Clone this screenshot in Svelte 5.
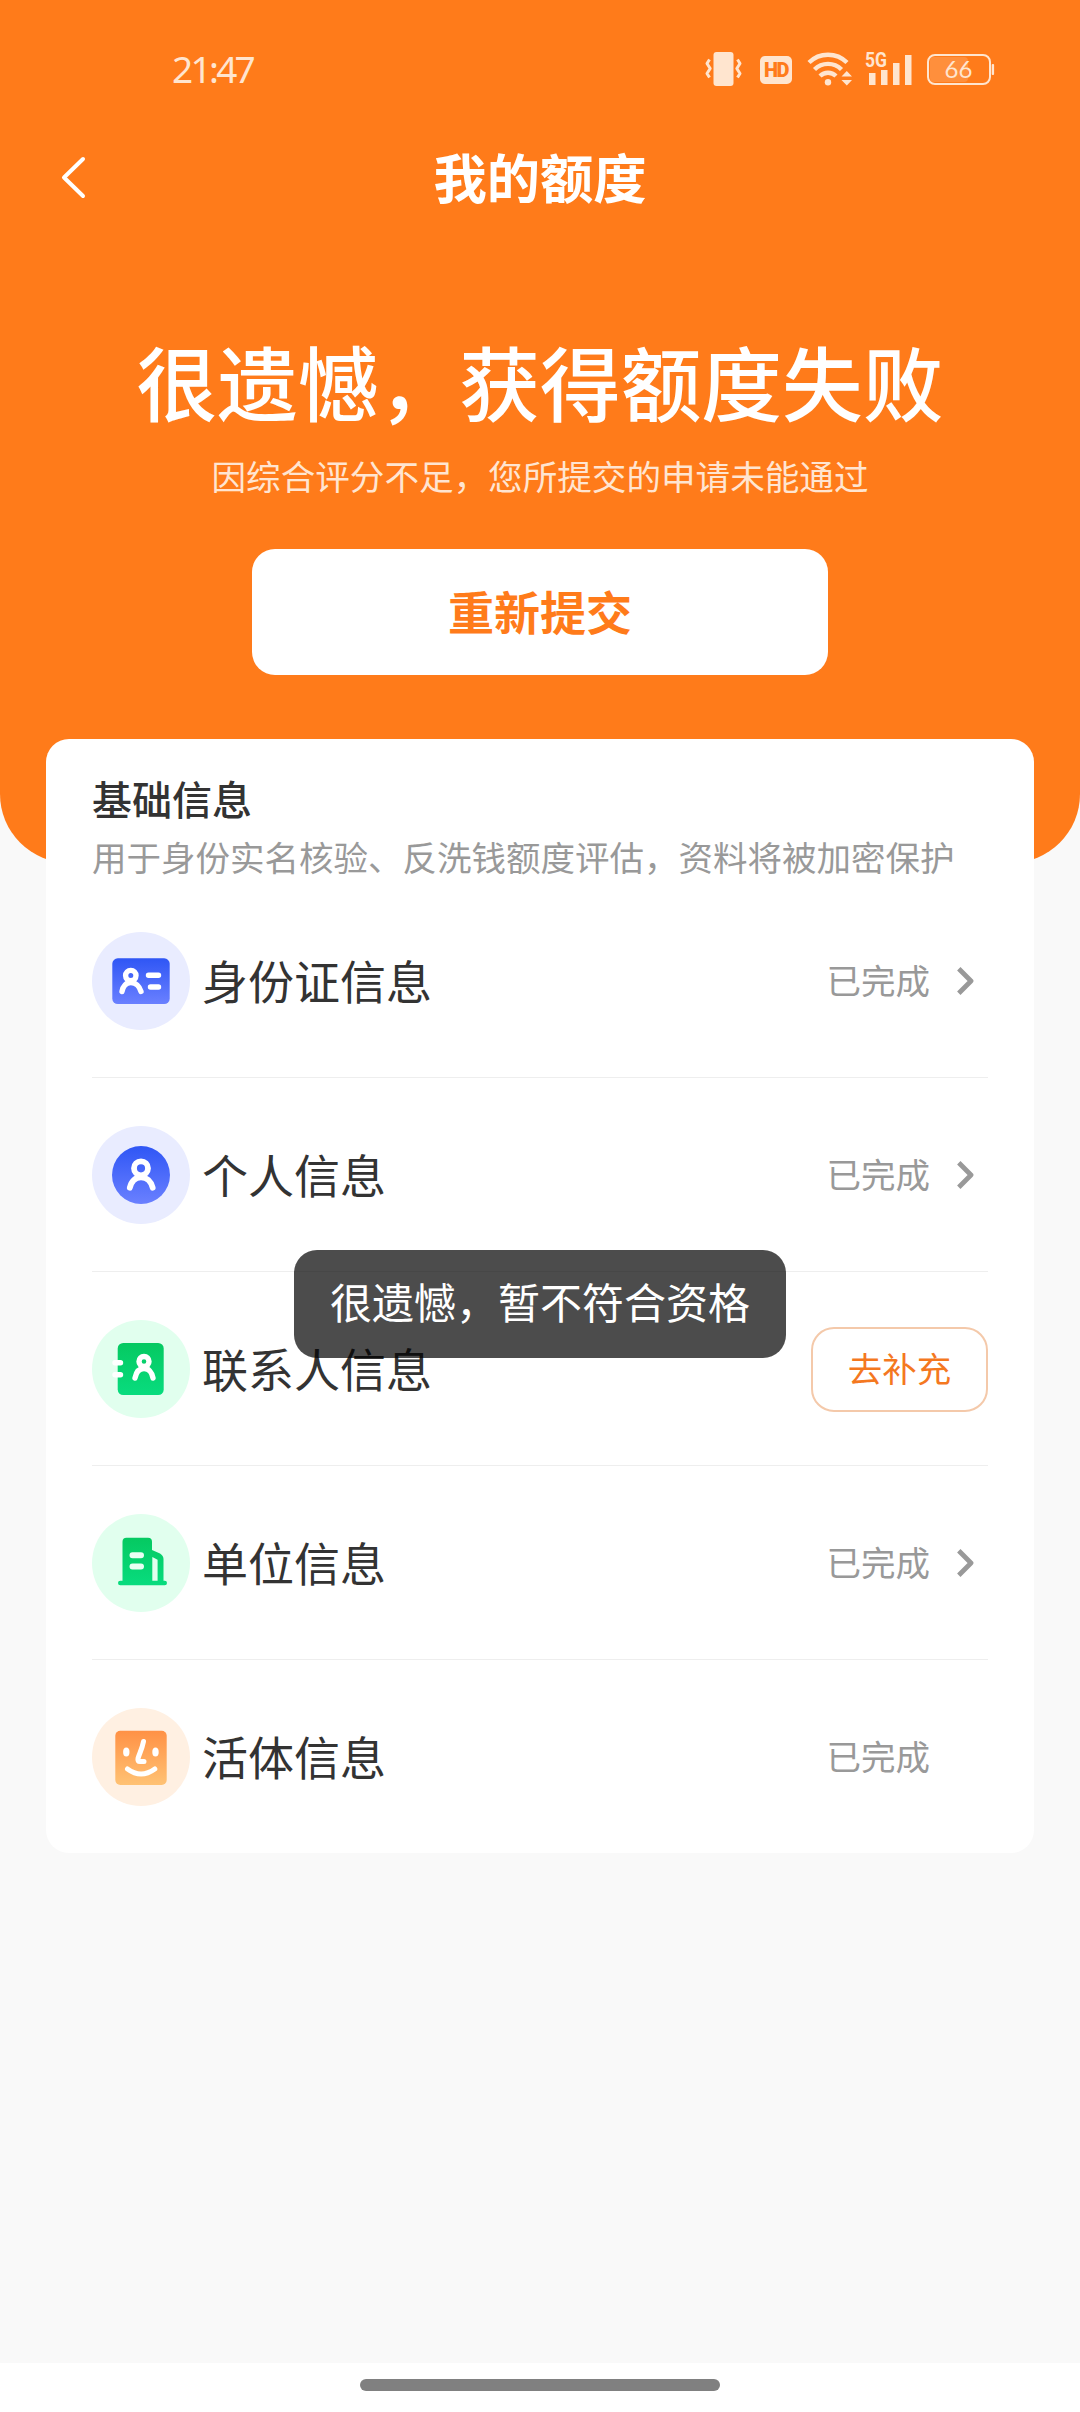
<script lang="ts">
    type Item = {
        icon: string;
        tone: string;
        label: string;
        action?: string;
        arrow?: boolean;
    };

    const items: Item[] = [
        { icon: "card", tone: "blue", label: "身份证信息", arrow: true },
        { icon: "person", tone: "blue", label: "个人信息", arrow: true },
        { icon: "contact", tone: "green", label: "联系人信息", action: "去补充" },
        { icon: "company", tone: "green", label: "单位信息", arrow: true },
        { icon: "face", tone: "orange", label: "活体信息" },
    ];

    const toast = "很遗憾，暂不符合资格";
</script>

<div class="page">
    <header class="hero">
        <div class="status-bar">
            <span class="time">21:47</span>
            <div class="status-icons">
                <svg class="vibrate" width="38" height="36" viewBox="0 0 38 36">
                    <rect x="8.5" y="1" width="20" height="34" rx="3" fill="#ffe5cf" />
                    <path d="M4.5 8.5 L2 12.5 L5.2 17.5 L2 22.5 L4.5 26.5 M32.5 8.5 L35 12.5 L31.8 17.5 L35 22.5 L32.5 26.5" fill="none" stroke="#ffe5cf" stroke-width="3" stroke-linejoin="round" />
                </svg>
                <span class="hd">HD</span>
                <svg class="wifi" width="46" height="36" viewBox="0 0 46 36">
                    <g fill="none" stroke="#ffe5cf" stroke-width="4.4">
                        <path d="M2 11.5 A27 27 0 0 1 40 11.5" />
                        <path d="M7.5 18.5 A19 19 0 0 1 34.5 18.5" />
                        <path d="M13 25 A11.5 11.5 0 0 1 29 25" />
                    </g>
                    <circle cx="21" cy="31.3" r="3.2" fill="#ffe5cf" />
                    <path d="M34.5 25.5 L39.8 20 L45 25.5 Z M34.5 29 L39.8 34.5 L45 29 Z" fill="#ffe5cf" />
                </svg>
                <svg class="signal" width="48" height="44" viewBox="0 -4 48 44">
                    <path d="M4 22 h6.5 v12 h-6.5 Z M16 19 h6.5 v15 h-6.5 Z M28 12 h6.5 v22 h-6.5 Z M40 4 h6.5 v30 h-6.5 Z" fill="#ffe5cf" />
                    <text x="0" y="16" class="net" textLength="22" lengthAdjust="spacingAndGlyphs">5G</text>
                </svg>
                <svg class="battery" width="68" height="36" viewBox="0 0 68 36">
                    <rect x="3" y="6" width="38" height="25" rx="4" fill="#ff8f3c" />
                    <rect x="1" y="4" width="62" height="29" rx="7" fill="none" stroke="#ffe5cf" stroke-width="2" />
                    <rect x="64.7" y="13" width="2.4" height="11" rx="1" fill="#ffe5cf" />
                    <text x="31.5" y="27" class="level" text-anchor="middle">66</text>
                </svg>
            </div>
        </div>

        <nav class="nav-bar">
            <button class="back" aria-label="返回">
                <svg width="28" height="46" viewBox="0 0 28 46">
                    <path d="M24 4 L5 22.5 L24 41" fill="none" stroke="#fff" stroke-width="4" stroke-linecap="round" stroke-linejoin="round" />
                </svg>
            </button>
            <h1>我的额度</h1>
        </nav>

        <h2>很遗憾，获得额度失败</h2>
        <p class="reason">因综合评分不足，您所提交的申请未能通过</p>
        <button class="resubmit">重新提交</button>
    </header>

    <main class="card">
        <h3>基础信息</h3>
        <p class="desc">用于身份实名核验、反洗钱额度评估，资料将被加密保护</p>

        <ul>
            {#each items as item}
                <li>
                    <span class="icon {item.tone}">
                        <svg width="98" height="98" viewBox="0 0 98 98" fill="none" stroke-linecap="round" stroke-linejoin="round">
                            <defs>
                                <linearGradient id="blue" x1="0" y1="0" x2="0" y2="1">
                                    <stop offset="0" stop-color="#2f56f5" />
                                    <stop offset="1" stop-color="#6a80ff" />
                                </linearGradient>
                                <linearGradient id="green" x1="0" y1="0" x2="0" y2="1">
                                    <stop offset="0" stop-color="#05c961" />
                                    <stop offset="1" stop-color="#08dc7e" />
                                </linearGradient>
                                <linearGradient id="orange" x1="0" y1="0" x2="0" y2="1">
                                    <stop offset="0" stop-color="#ff9145" />
                                    <stop offset="1" stop-color="#ffc274" />
                                </linearGradient>
                            </defs>
                            {#if item.icon === "card"}
                                <rect x="20.3" y="26.3" width="57.4" height="45.7" rx="5.5" fill="url(#blue)" />
                                <g stroke="#fff" stroke-width="5.4">
                                    <circle cx="38.8" cy="43.6" r="5.2" />
                                    <path d="M30 59.5 C31 54 34.5 50.5 38.8 50.5 C43.5 50.5 47.5 54 49 59.5" />
                                    <path d="M56.5 43.3 H66.5 M58.5 55 H66.5" />
                                </g>
                            {:else if item.icon === "person"}
                                <circle cx="49" cy="49" r="29" fill="url(#blue)" />
                                <g stroke="#fff" stroke-width="5.8">
                                    <circle cx="49" cy="42.3" r="7" />
                                    <path d="M37.8 61.7 C39.5 55 43.5 51.3 49 51.3 C54.5 51.3 59 55 60.7 61.7" />
                                </g>
                            {:else if item.icon === "contact"}
                                <rect x="25.7" y="23" width="46" height="52" rx="5.5" fill="url(#green)" />
                                <g stroke="#fff" stroke-width="5.4">
                                    <circle cx="52" cy="41.5" r="5" />
                                    <path d="M43 58 C44.2 52 47.5 48.5 52 48.5 C56.5 48.5 60 52 61 58" />
                                    <path d="M23 42.8 H28.5 M23 54.8 H28.5" />
                                </g>
                            {:else if item.icon === "company"}
                                <path d="M34.5 23.7 H56 Q60 23.7 60 27.7 V36 L68 39.4 Q71.5 41.6 71.5 45 V66.7 H72.7 Q75 66.7 75 69 Q75 71.3 72.7 71.3 H28.3 Q26 71.3 26 69 Q26 66.7 28.3 66.7 H30.5 V27.7 Q30.5 23.7 34.5 23.7 Z" fill="url(#green)" />
                                <path d="M60.3 43 L65.6 45.8 V66.7 H60.3 Z" fill="#e1ffee" />
                                <path d="M40.5 41.2 H49 M40.5 52.4 H49" stroke="#e9fff3" stroke-width="6" />
                            {:else}
                                <rect x="23.3" y="22.7" width="51.4" height="54.3" rx="5" fill="url(#orange)" />
                                <ellipse cx="34.3" cy="44" rx="3.2" ry="4.5" fill="#fff" />
                                <ellipse cx="63.5" cy="44" rx="3.2" ry="4.5" fill="#fff" />
                                <path d="M51.5 33.5 C49.8 42 47.5 45 46 50.5 Q45.3 53.5 48 53.5 H52" stroke="#fff" stroke-width="5" />
                                <path d="M35.5 61 Q49 71 62.8 61" stroke="#fff" stroke-width="5" />
                            {/if}
                        </svg>
                    </span>
                    <span class="label">{item.label}</span>
                    {#if item.action}
                        <button class="fill-in">{item.action}</button>
                    {:else}
                        <span class="done">已完成</span>
                        <span class="arrow">
                            {#if item.arrow}
                                <svg width="18" height="30" viewBox="0 0 18 30">
                                    <path d="M2.8 2.8 L15 15 L2.8 27.2" fill="none" stroke="#999" stroke-width="4.8" stroke-linejoin="round" />
                                </svg>
                            {/if}
                        </span>
                    {/if}
                </li>
            {/each}
        </ul>
    </main>

    <footer class="home-bar">
        <span></span>
    </footer>

    <div class="toast">{toast}</div>
</div>

<style>
:global(body) {
    margin: 0;
    background: #f9f9f9;
}

.page {
    position: relative;
    display: flex;
    flex-direction: column;
    width: 1080px;
    height: 2412px;
    background: #f9f9f9;
    font-family: "Noto Sans CJK SC", "Noto Sans", sans-serif;
    color: #333;
    overflow: hidden;
}

h1, h2, h3, p, ul {
    margin: 0;
    padding: 0;
}

button {
    padding: 0;
    border: none;
    background: none;
    font-family: inherit;
}

svg {
    display: block;
}

/* Orange header */
.hero {
    display: flex;
    flex-direction: column;
    align-items: center;
    flex-shrink: 0;
    box-sizing: border-box;
    height: 863px;
    background: #ff7b1a;
    border-radius: 0 0 69px 69px;
    color: #fff;
}

.status-bar {
    display: flex;
    align-items: center;
    justify-content: space-between;
    box-sizing: border-box;
    width: 100%;
    height: 138px;
    padding: 0 85px 0 172px;
}

.time {
    font-family: "Noto Sans", sans-serif;
    font-size: 37px;
    line-height: 40px;
    letter-spacing: -2.7px;
    color: #ffe5cf;
}

.status-icons {
    display: flex;
    align-items: center;
}

.hd {
    width: 32px;
    height: 28px;
    margin: 2px 15px 0 17px;
    border-radius: 5px;
    background: #ffe5cf;
    color: #ff7b1a;
    font-family: Roboto, sans-serif;
    font-size: 20px;
    font-weight: 900;
    line-height: 29px;
    letter-spacing: -1.5px;
    text-align: center;
}

.signal {
    margin-left: 12px;
}

.battery {
    margin-left: 14px;
}

.net {
    font-family: Roboto, sans-serif;
    font-size: 20px;
    font-weight: 700;
    fill: #ffe5cf;
    stroke: #ff7b1a;
    stroke-width: 2px;
    paint-order: stroke;
}

.level {
    font-family: Lato, sans-serif;
    font-size: 24px;
    fill: #ffe5cf;
}

.nav-bar {
    display: grid;
    grid-template-columns: 200px 1fr 200px;
    align-items: center;
    width: 100%;
    height: 80px;
}

.back {
    width: 28px;
    height: 46px;
    margin-left: 59px;
}

h1 {
    padding-bottom: 5px;
    font-size: 53.3px;
    font-weight: 700;
    line-height: 75px;
    text-align: center;
}

h2 {
    margin-top: 112px;
    font-size: 80.7px;
    font-weight: 500;
    line-height: 100px;
    white-space: nowrap;
}

.reason {
    margin-top: 20px;
    font-size: 34.6px;
    font-weight: 400;
    line-height: 50px;
    color: #ffe5d1;
}

.resubmit {
    width: 576px;
    height: 126px;
    margin-top: 49px;
    padding-bottom: 4px;
    border-radius: 23px;
    background: #fff;
    color: #ff7b1a;
    font-size: 46px;
    font-weight: 700;
    line-height: 122px;
}

/* Info card */
.card {
    box-sizing: border-box;
    width: 988px;
    height: 1114px;
    flex-shrink: 0;
    margin: -124px auto 0;
    padding: 34px 46px 0;
    border-radius: 23px;
    background: #fff;
}

h3 {
    font-size: 40px;
    font-weight: 500;
    line-height: 50px;
}

.desc {
    margin-top: 9px;
    font-size: 34.5px;
    line-height: 48px;
    color: #999;
    white-space: nowrap;
}

ul {
    margin-top: 4px;
    list-style: none;
}

li {
    display: flex;
    align-items: center;
    box-sizing: border-box;
    height: 194px;
    padding-top: 1px;
    border-bottom: 1px solid #eee;
}

li:last-child {
    border-bottom-color: transparent;
}

.icon {
    width: 98px;
    height: 98px;
    border-radius: 50%;
}

.blue {
    background: #e9ecff;
}

.green {
    background: #e1ffee;
}

.orange {
    background: #fff0e2;
}

.label {
    flex: 1;
    margin-left: 12px;
    padding-bottom: 5px;
    font-size: 46px;
    line-height: 60px;
}

.done {
    padding-bottom: 5px;
    font-size: 34.5px;
    line-height: 48px;
    color: #999;
}

.arrow {
    width: 32px;
    margin-left: 26px;
    padding-bottom: 1px;
}

.fill-in {
    box-sizing: border-box;
    width: 177px;
    height: 85px;
    padding-bottom: 4px;
    border: 2px solid #f4c9aa;
    border-radius: 23px;
    color: #f4781f;
    font-size: 34.5px;
    line-height: 77px;
}

.home-bar {
    display: flex;
    justify-content: center;
    box-sizing: border-box;
    height: 49px;
    margin-top: auto;
    padding-top: 16px;
    background: #fff;
}

.home-bar span {
    width: 360px;
    height: 12px;
    border-radius: 6px;
    background: #808080;
}

.toast {
    position: absolute;
    top: 1250px;
    left: 294px;
    width: 492px;
    height: 108px;
    border-radius: 23px;
    background: rgba(0, 0, 0, 0.7);
    color: #fff;
    font-size: 42px;
    line-height: 102px;
    text-align: center;
    white-space: nowrap;
}
</style>
